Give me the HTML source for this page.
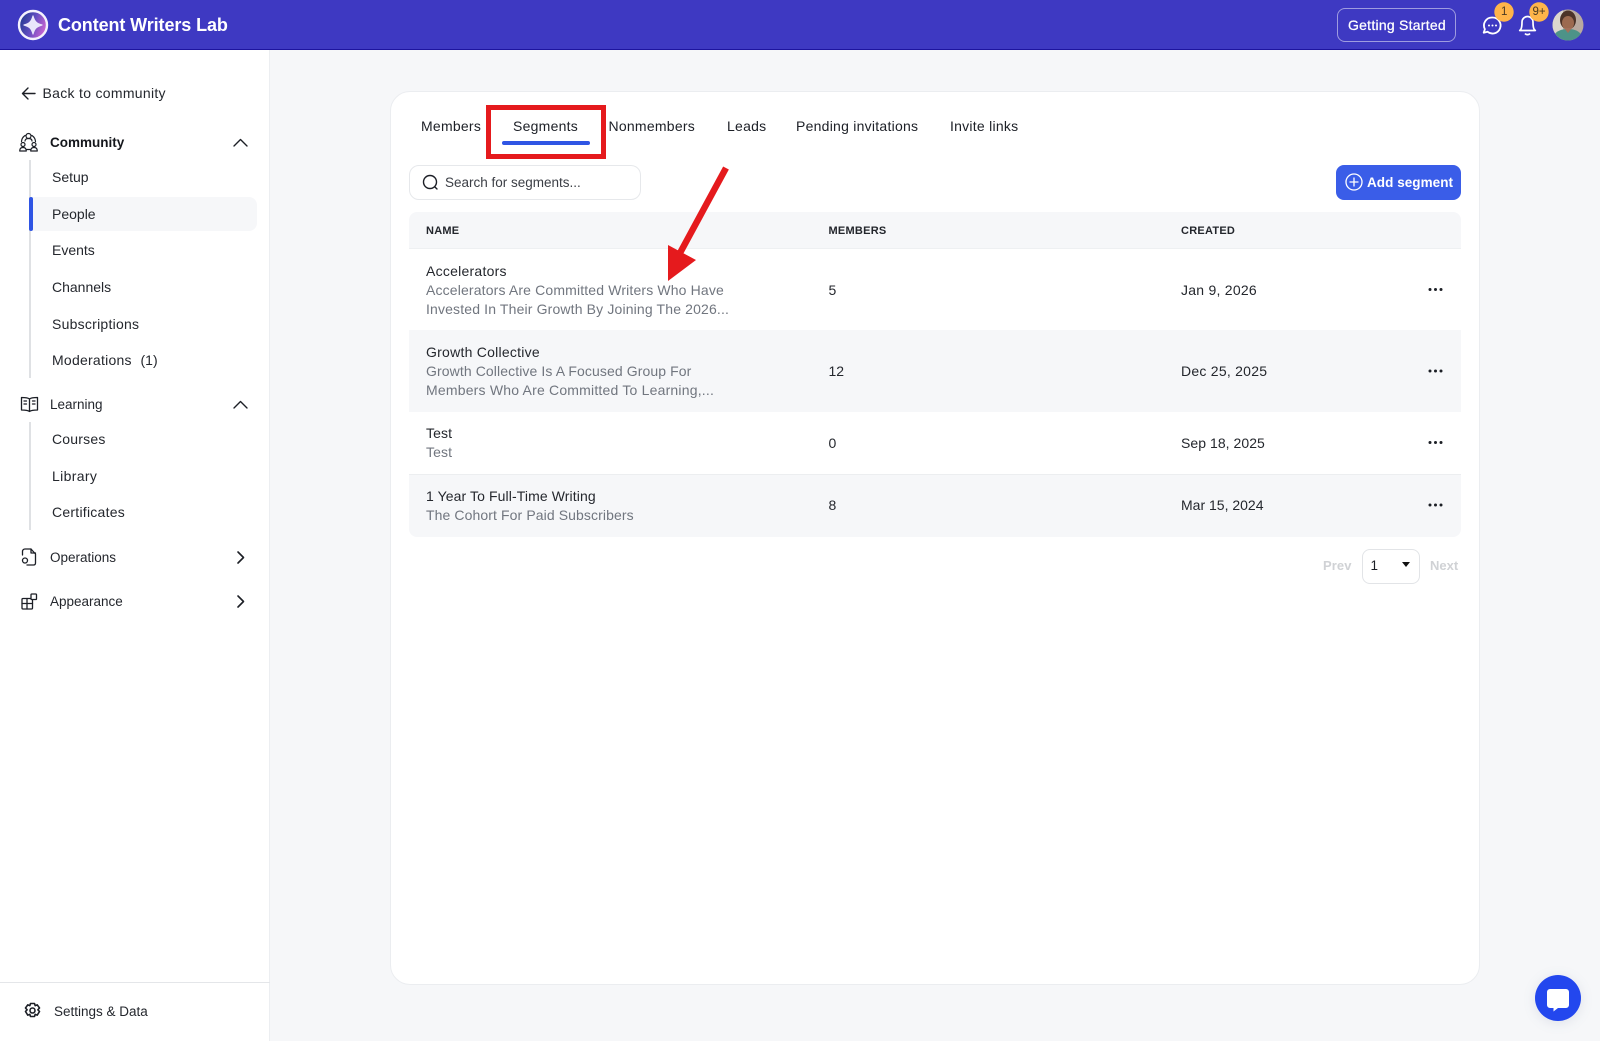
<!DOCTYPE html>
<html><head><meta charset="utf-8"><title>Content Writers Lab</title>
<style>
*{box-sizing:border-box}
html,body{margin:0;padding:0;width:1600px;height:1041px;overflow:hidden;background:#f6f7f9;font-family:"Liberation Sans",sans-serif;color:#1c1f26}
.a,.t{position:absolute}
.t{white-space:nowrap;font-size:13px;line-height:20px;height:20px}
.b{font-weight:700}
svg{position:absolute;overflow:visible}
.ic{fill:none;stroke:#1c1f26;stroke-width:1.4;stroke-linecap:round;stroke-linejoin:round}
.s{font-size:14px;color:#24272d;margin-top:1px}
.g{color:#71767f!important}
.h{font-size:11px;font-weight:700;color:#23262c;letter-spacing:.25px;margin-top:1px}
</style></head><body>
<div class="a" style="left:0;top:0;width:1600px;height:50px;background:#3e39c2;border-bottom:1px solid #1d149e"></div>
<svg style="left:0;top:0" width="70" height="50"><defs><linearGradient id="lg" x1="0" x2="1" y1="0.2" y2="0.6"><stop offset="0" stop-color="#1d3a8c"/><stop offset=".5" stop-color="#5f4cc0"/><stop offset="1" stop-color="#cf66d2"/></linearGradient></defs><circle cx="33" cy="25" r="14" fill="url(#lg)" stroke="#f4f2fd" stroke-width="2.4"/><path d="M33 16C34.500 21.500 36.500 23.500 42 25 36.500 26.500 34.500 28.500 33 34 31.500 28.500 29.500 26.500 24 25 29.500 23.500 31.500 21.500 33 16Z" fill="#e9e6fb" stroke="#e9e6fb" stroke-width="1.200" stroke-linejoin="round"/></svg>
<div class="t b" style="left:58px;top:15px;color:#fff;font-size:18px;letter-spacing:-.1px">Content Writers Lab</div>
<div class="a" style="left:1337px;top:8px;width:119px;height:34px;border:1px solid #9f9ce0;border-radius:8px"></div>
<div class="t" style="left:1348px;top:15px;color:#fff;font-size:14px;-webkit-text-stroke:.25px #fff;letter-spacing:.25px">Getting Started</div>
<svg style="left:1480px;top:0" width="120" height="50">
<path d="M12.500 17.500a8 8 0 1 1-5 14.200l-3.800 1 1.200-3.500A8 8 0 0 1 12.500 17.500Z" fill="none" stroke="#fff" stroke-width="1.800" stroke-linejoin="round"/><circle cx="9" cy="25.500" r="1" fill="#fff"/><circle cx="12.500" cy="25.500" r="1" fill="#fff"/><circle cx="16" cy="25.500" r="1" fill="#fff"/>
<path d="M41 29c.9-1.700 1-4 1-7a5.500 5.500 0 0 1 11 0c0 3 .1 5.300 1 7l1.300 1.500H39.700Z" fill="none" stroke="#fff" stroke-width="1.700" stroke-linejoin="round"/><path d="M45 33.500a3 2.500 0 0 0 5 0" fill="none" stroke="#fff" stroke-width="1.700"/>
<circle cx="24" cy="12" r="9.700" fill="#ffb44a"/><circle cx="59" cy="12" r="9.700" fill="#ffb44a"/>
<clipPath id="av"><circle cx="88" cy="25" r="15.500"/></clipPath>
<g clip-path="url(#av)"><rect x="72" y="9" width="32" height="32" fill="#b9aaa0"/><rect x="72" y="9" width="11" height="32" fill="#dcd6ce"/><ellipse cx="88" cy="20" rx="8" ry="9.500" fill="#4c3328"/><ellipse cx="88" cy="23" rx="6" ry="7" fill="#9c6a50"/><path d="M72 41c1-9 8-12 16-12s14 3 16 12Z" fill="#4d9388"/><path d="M84 28l4 5 4-5Z" fill="#a3705a"/></g>
</svg>
<div class="t" style="left:1501px;top:2px;font-size:11.500px;color:#4b3a22">1</div>
<div class="t" style="left:1532.500px;top:2px;font-size:11.500px;color:#4b3a22">9+</div>

<div class="a" style="left:0;top:50px;width:270px;height:991px;background:#fff;border-right:1px solid #eceef1"></div>
<svg style="left:21px;top:86px" width="16" height="16" class="ic"><path d="M14 7.500H1.500M7 2 1.500 7.500 7 13" class="ic"/></svg>
<div class="t s" style="left:42.500px;top:82px;letter-spacing:.3px">Back to community</div>
<svg style="left:19px;top:132px" width="20" height="21"><g class="ic" style="stroke-width:1.200"><circle cx="9.500" cy="4" r="2.500"/><path d="M6 9c0-1.800 1.500-2.500 3.500-2.500S13 7.200 13 9M6 3.500A8 8 0 0 0 2.500 9.500M13 3.500a8 8 0 0 1 3.500 6"/><circle cx="4" cy="12.500" r="2"/><circle cx="15" cy="12.500" r="2"/><path d="M.7 19c0-2.500 1.300-3.500 3.300-3.500s3.300 1 3.300 3.500ZM11.700 19c0-2.500 1.300-3.500 3.300-3.500s3.300 1 3.300 3.500ZM8 17.500h3"/></g></svg>
<div class="t b s" style="left:50px;top:132px;font-size:13.500px;color:#15171c">Community</div>
<svg style="left:233px;top:137.500px" width="16" height="10"><path d="M1 8 7.500 1.500 14 8" class="ic"/></svg>
<div class="a" style="left:29px;top:160px;width:2px;height:218px;background:#dfe1e4"></div>
<div class="a" style="left:29px;top:197px;width:228px;height:34px;background:#f6f7f9;border-radius:4px 8px 8px 4px"></div>
<div class="a" style="left:29px;top:197px;width:4px;height:34px;background:#2f55e4;border-radius:2px"></div>
<div class="t s" style="left:52px;top:166px">Setup</div>
<div class="t s" style="left:52px;top:203px">People</div>
<div class="t s" style="left:52px;top:239px">Events</div>
<div class="t s" style="left:52px;top:276px">Channels</div>
<div class="t s" style="left:52px;top:313px;letter-spacing:.25px">Subscriptions</div>
<div class="t s" style="left:52px;top:349px;letter-spacing:.25px">Moderations</div>
<div class="t s" style="left:140.500px;top:349px">(1)</div>
<svg style="left:20px;top:396px" width="19" height="18"><g class="ic" style="stroke-width:1.300"><path d="M9.500 3C8 1.500 4 1.500 1.500 1.500v12.500c3 0 6 0 8 1.500 2-1.500 5-1.500 8-1.500V1.500c-2.500 0-6.500 0-8 1.500ZM9.500 3v12.500"/><path d="M4 5h2.500M4 8h2.500M12.500 5H15M12.500 8H15" /></g></svg>
<div class="t s" style="left:50px;top:394px;font-size:13.500px">Learning</div>
<svg style="left:233px;top:399.500px" width="16" height="10"><path d="M1 8 7.500 1.500 14 8" class="ic"/></svg>
<div class="a" style="left:29px;top:422px;width:2px;height:108px;background:#dfe1e4"></div>
<div class="t s" style="left:52px;top:428px;letter-spacing:.2px">Courses</div>
<div class="t s" style="left:52px;top:465px;letter-spacing:.35px">Library</div>
<div class="t s" style="left:52px;top:501px;letter-spacing:.25px">Certificates</div>
<svg style="left:21px;top:548px" width="16" height="18"><g class="ic" style="stroke-width:1.300"><path d="M1.500 7V3.500C1.500 2 2.500 1 4 1H10l4.500 5v9c0 1.300-.8 2-2 2H6"/><path d="M10 1v4h4.500"/><circle cx="4" cy="12.500" r="2.500"/></g></svg>
<div class="t s" style="left:50px;top:547px;font-size:13.500px">Operations</div>
<svg style="left:236px;top:550.500px" width="10" height="14"><path d="M2 1 7.500 6.500 2 12" class="ic" style="stroke-width:1.600"/></svg>
<svg style="left:20px;top:593px" width="18" height="18"><g class="ic" style="stroke-width:1.300"><rect x="2" y="5.500" width="10.500" height="10.500" rx="1"/><path d="M2 10.500h10.500M7 5.500v10.500"/><rect x="11" y="1" width="5.500" height="5.500" rx=".8" fill="#fff"/></g></svg>
<div class="t s" style="left:50px;top:591px;font-size:13.500px">Appearance</div>
<svg style="left:236px;top:595px" width="10" height="14"><path d="M2 1 7.500 6.500 2 12" class="ic" style="stroke-width:1.600"/></svg>
<div class="a" style="left:0;top:982px;width:270px;height:1px;background:#e4e6e9"></div>
<svg style="left:24px;top:1002px" width="18" height="18"><g class="ic" style="stroke-width:1.600"><path d="M6.500 1.500h4l.7 2.200 2-.9 2.300 3.200-1.600 1.800 1.600 1.700-2.300 3.700-2-.9-.7 2.200h-4l-.7-2.200-2 .9L1.500 9.500l1.600-1.700L1.500 6l2.300-3.200 2 .9Z"/><circle cx="8.500" cy="8.500" r="2.500"/></g></svg>
<div class="t s" style="left:54px;top:1001px;font-size:13.500px">Settings &amp; Data</div>

<div class="a" style="left:390px;top:91px;width:1090px;height:894px;background:#fff;border:1px solid #ebedf0;border-radius:20px"></div>
<div class="t s" style="left:421px;top:115px;letter-spacing:.25px;color:#1c1f26">Members</div>
<div class="t s" style="left:513px;top:115px;letter-spacing:.25px;color:#1c1f26">Segments</div>
<div class="t s" style="left:608.500px;top:115px;letter-spacing:.25px;color:#1c1f26">Nonmembers</div>
<div class="t s" style="left:727px;top:115px;letter-spacing:.25px;color:#1c1f26">Leads</div>
<div class="t s" style="left:796px;top:115px;letter-spacing:.25px;color:#1c1f26">Pending invitations</div>
<div class="t s" style="left:950px;top:115px;letter-spacing:.25px;color:#1c1f26">Invite links</div>
<div class="a" style="left:502px;top:141px;width:88px;height:4px;background:#2f55e4;border-radius:2px"></div>
<div class="a" style="left:486px;top:105px;width:120px;height:54px;border:5.500px solid #e51a1d"></div>

<div class="a" style="left:409px;top:165px;width:232px;height:35px;border:1px solid #e6e8eb;border-radius:10px;background:#fff"></div>
<svg style="left:421px;top:174px" width="18" height="18"><circle cx="9" cy="8" r="6.500" fill="none" stroke="#1c1f26" stroke-width="1.400"/><path d="M13.700 12.700 16 15" stroke="#1c1f26" stroke-width="1.400" stroke-linecap="round"/></svg>
<div class="t s" style="left:445px;top:172px;font-size:13.500px;color:#3b3e45">Search for segments...</div>
<div class="a" style="left:1336px;top:165px;width:125px;height:35px;background:#3a5de8;border-radius:8px"></div>
<svg style="left:1345px;top:173px" width="18" height="18"><circle cx="9" cy="9" r="8" fill="none" stroke="#fff" stroke-width="1.300"/><path d="M9 5v8M5 9h8" stroke="#fff" stroke-width="1.300" stroke-linecap="round"/></svg>
<div class="t b" style="left:1367px;top:173px;color:#fff;font-size:13.500px;letter-spacing:.05px">Add segment</div>

<div class="a" style="left:409px;top:212px;width:1052px;height:325px;background:#fff;border-radius:8px;overflow:hidden">
<div class="a" style="left:0;top:0;width:1052px;height:37px;background:#f6f7f9;border-bottom:1px solid #eef0f2"></div>
<div class="a" style="left:0;top:118px;width:1052px;height:82px;background:#f6f7f9"></div>
<div class="a" style="left:0;top:262px;width:1052px;height:63px;background:#f6f7f9;border-top:1px solid #eceef0"></div>
</div>
<div class="t h" style="left:426px;top:220px">NAME</div>
<div class="t h" style="left:828.500px;top:220px">MEMBERS</div>
<div class="t h" style="left:1181px;top:220px">CREATED</div>

<div class="t s" style="left:426px;top:260px;letter-spacing:.25px">Accelerators</div>
<div class="t s g" style="left:426px;top:279px;letter-spacing:.15px">Accelerators Are Committed Writers Who Have</div>
<div class="t s g" style="left:426px;top:298px;letter-spacing:.15px">Invested In Their Growth By Joining The 2026...</div>
<div class="t s" style="left:828.500px;top:279px">5</div>
<div class="t s" style="left:1181px;top:279px;letter-spacing:.25px">Jan 9, 2026</div>

<div class="t s" style="left:426px;top:341px;letter-spacing:.25px">Growth Collective</div>
<div class="t s g" style="left:426px;top:360px;letter-spacing:.1px">Growth Collective Is A Focused Group For</div>
<div class="t s g" style="left:426px;top:379px;letter-spacing:.2px">Members Who Are Committed To Learning,...</div>
<div class="t s" style="left:828.500px;top:360px">12</div>
<div class="t s" style="left:1181px;top:360px;letter-spacing:.25px">Dec 25, 2025</div>

<div class="t s" style="left:426px;top:422px;letter-spacing:.1px">Test</div>
<div class="t s g" style="left:426px;top:441px;letter-spacing:.1px">Test</div>
<div class="t s" style="left:828.500px;top:432px">0</div>
<div class="t s" style="left:1181px;top:432px;letter-spacing:.05px">Sep 18, 2025</div>

<div class="t s" style="left:426px;top:485px;letter-spacing:.1px">1 Year To Full-Time Writing</div>
<div class="t s g" style="left:426px;top:504px;letter-spacing:.1px">The Cohort For Paid Subscribers</div>
<div class="t s" style="left:828.500px;top:494px">8</div>
<div class="t s" style="left:1181px;top:494px">Mar 15, 2024</div>

<svg style="left:1420px;top:280px" width="30" height="240" fill="#1c1f26">
<g><circle cx="10" cy="9.500" r="1.500"/><circle cx="15.500" cy="9.500" r="1.500"/><circle cx="21" cy="9.500" r="1.500"/></g>
<g transform="translate(0,81.500)"><circle cx="10" cy="9.500" r="1.500"/><circle cx="15.500" cy="9.500" r="1.500"/><circle cx="21" cy="9.500" r="1.500"/></g>
<g transform="translate(0,153)"><circle cx="10" cy="9.500" r="1.500"/><circle cx="15.500" cy="9.500" r="1.500"/><circle cx="21" cy="9.500" r="1.500"/></g>
<g transform="translate(0,215.500)"><circle cx="10" cy="9.500" r="1.500"/><circle cx="15.500" cy="9.500" r="1.500"/><circle cx="21" cy="9.500" r="1.500"/></g>
</svg>

<div class="t b" style="left:1323px;top:555.500px;color:#d0d2d5;letter-spacing:.1px">Prev</div>
<div class="a" style="left:1362px;top:549px;width:58px;height:34.500px;border:1px solid #e2e4e7;border-radius:8px"></div>
<div class="t" style="left:1370.500px;top:555.500px;font-size:13.500px">1</div>
<svg style="left:1401px;top:561px" width="10" height="8"><path d="M1 1h8L5 6Z" fill="#111"/></svg>
<div class="t b" style="left:1430px;top:555.500px;color:#d0d2d5">Next</div>

<svg style="left:0;top:0;pointer-events:none" width="1600" height="1041">
<path d="M726 168 680 253" stroke="#e51a1d" stroke-width="6.500" fill="none"/>
<path d="M668 245 696 260 668 281Z" fill="#e51a1d"/>
</svg>

<svg style="left:1530px;top:970px;filter:drop-shadow(0 2px 6px rgba(60,70,120,.12))" width="56" height="56"><circle cx="28" cy="28" r="23" fill="#2347ee"/><path d="M20 19h16a3 3 0 0 1 3 3v13a3 3 0 0 1-3 3h-8l-4.500 3.500V38H20a3 3 0 0 1-3-3V22a3 3 0 0 1 3-3Z" fill="#fff"/></svg>
</body></html>
